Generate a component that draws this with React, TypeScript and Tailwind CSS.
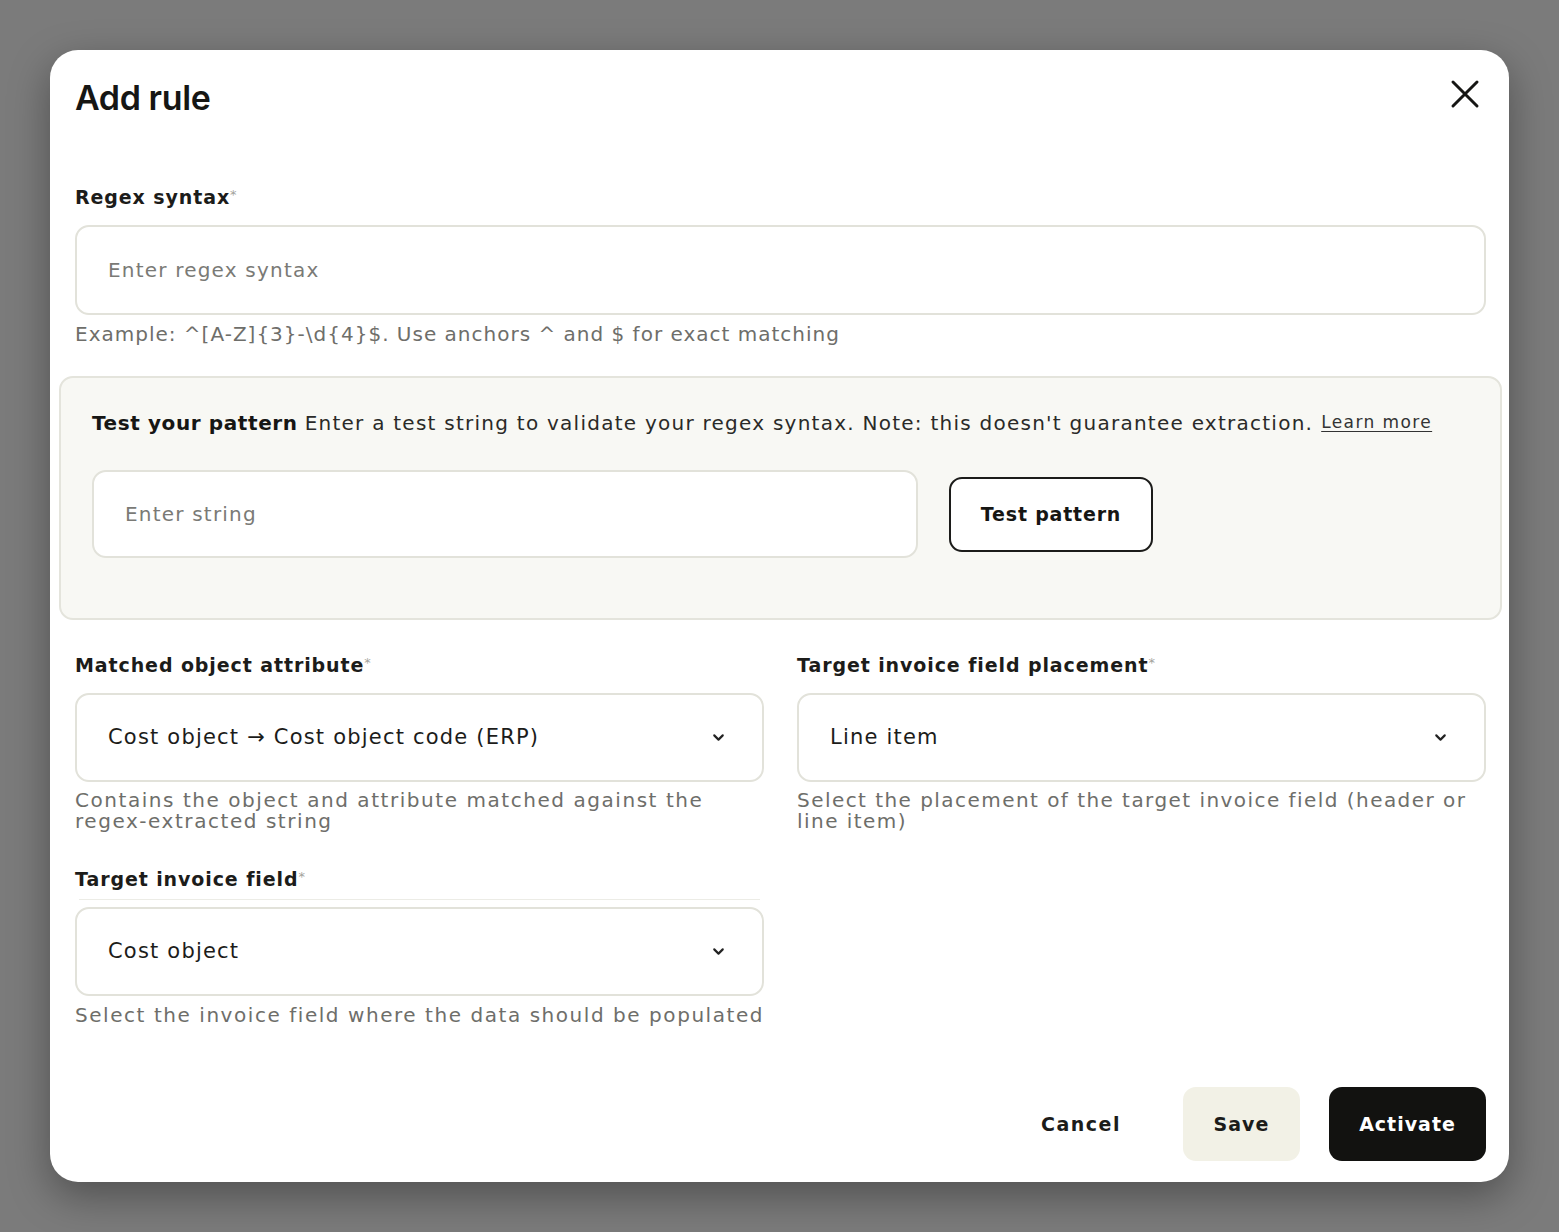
import React from 'react';
import { ChevronDown } from 'lucide-react';

const body = { fontFamily: '"DejaVu Sans", "Noto Sans", sans-serif' };
const heading = { fontFamily: 'Inter, "Noto Sans", sans-serif' };

const Label: React.FC<{ text: string }> = ({ text }) => (
  <div className="h-[28px] flex items-center text-[19px] font-semibold text-[#1c1c1a] tracking-[0.9px]">
    {text}
    <span className="text-[#a3a39c] text-[13px] self-start mt-[2px] font-normal tracking-normal">*</span>
  </div>
);

const Select: React.FC<{ value: string }> = ({ value }) => (
  <div className="h-[89px] rounded-[14px] border-2 border-[#e2e2da] bg-white flex items-center justify-between pl-[31px] pr-[35px]">
    <span className="text-[21px] text-[#1c1c1a] tracking-[1.2px]">{value}</span>
    <ChevronDown size={17} strokeWidth={3} className="text-[#222]" />
  </div>
);

const Helper: React.FC<{ children: React.ReactNode; className?: string }> = ({ children, className }) => (
  <p className={`text-[20px] text-[#6e6e6a] ${className ?? ''}`}>{children}</p>
);

export default function App() {
  return (
    <div style={body} className="min-h-screen bg-[#7b7b7b] p-[50px]">
      <div className="w-[1459px] h-[1132px] bg-white rounded-[28px] shadow-[0_14px_40px_rgba(0,0,0,0.35)] pl-[25px] pr-[23px] pt-[26px] flex flex-col">
        <div className="h-[42px] flex items-center justify-between">
          <h1 style={heading} className="text-[34px] font-semibold text-[#161614] tracking-[-0.4px]">Add rule</h1>
          <svg width="30" height="30" viewBox="0 0 30 30" className="mr-[6px] -mt-[6px]">
            <path d="M3 3 L27 27 M27 3 L3 27" stroke="#161614" strokeWidth="3" strokeLinecap="round" />
          </svg>
        </div>

        <div className="mt-[65px]">
          <Label text="Regex syntax" />
          <div className="mt-[14px] h-[90px] rounded-[14px] border-2 border-[#e2e2da] flex items-center pl-[31px]">
            <span className="text-[20px] text-[#7a7a76] tracking-[1.2px]">Enter regex syntax</span>
          </div>
          <Helper className="mt-[7px] leading-[24px] whitespace-nowrap tracking-[1px]">
            Example: ^[A-Z]{'{3}'}-\d{'{4}'}$. Use anchors ^ and $ for exact matching
          </Helper>
        </div>

        <div className="mt-[30px] -ml-[16px] -mr-[16px] h-[244px] rounded-[14px] border-2 border-[#e4e4dc] bg-[#f8f8f4] pl-[31px] pt-[31px]">
          <div className="h-[28px] flex items-center text-[20px] text-[#2a2a28] tracking-[1.25px] whitespace-nowrap">
            <span className="font-semibold text-[#161614] tracking-[0.6px]">Test your pattern</span>
            <span className="ml-[7px]">Enter a test string to validate your regex syntax. Note: this doesn't guarantee extraction.</span>
            <span className="ml-[8px] text-[17px] underline underline-offset-[3px] text-[#333] tracking-[1.4px]">Learn more</span>
          </div>
          <div className="mt-[33px] flex items-center gap-[31px]">
            <div className="w-[826px] h-[88px] rounded-[14px] border-2 border-[#e2e2da] bg-white flex items-center pl-[31px]">
              <span className="text-[20px] text-[#7a7a76] tracking-[1.2px]">Enter string</span>
            </div>
            <button className="w-[204px] h-[75px] rounded-[13px] border-2 border-[#1c1c1a] bg-white text-[19px] font-semibold text-[#161614] tracking-[0.8px]">
              Test pattern
            </button>
          </div>
        </div>

        <div className="mt-[31px] grid grid-cols-2 gap-x-[33px]">
          <div>
            <Label text="Matched object attribute" />
            <div className="mt-[14px]">
              <Select value="Cost object → Cost object code (ERP)" />
            </div>
            <Helper className="mt-[8px] leading-[21px] tracking-[1.55px]">
              Contains the object and attribute matched against the regex-extracted string
            </Helper>
          </div>
          <div>
            <Label text="Target invoice field placement" />
            <div className="mt-[14px]">
              <Select value="Line item" />
            </div>
            <Helper className="mt-[8px] leading-[21px] tracking-[1.45px]">
              Select the placement of the target invoice field (header or line item)
            </Helper>
          </div>
        </div>

        <div className="mt-[33px] w-[689px]">
          <Label text="Target invoice field" />
          <div className="mt-[6px] mx-[4px] border-t border-[#ececE6]" />
          <div className="mt-[7px]">
            <Select value="Cost object" />
          </div>
          <Helper className="mt-[7px] leading-[24px] whitespace-nowrap tracking-[1.55px]">
            Select the invoice field where the data should be populated
          </Helper>
        </div>

        <div className="mt-[60px] flex items-center justify-end">
          <button className="w-[130px] h-[74px] text-[19px] font-semibold text-[#1c1c1a] tracking-[1.5px]">Cancel</button>
          <button className="ml-[37px] h-[74px] w-[117px] rounded-[13px] bg-[#f2f1e6] text-[19px] font-semibold text-[#1c1c1a] tracking-[1px]">
            Save
          </button>
          <button className="ml-[29px] h-[74px] w-[157px] rounded-[13px] bg-[#121210] text-[19px] font-semibold text-white tracking-[1px]">
            Activate
          </button>
        </div>
      </div>
    </div>
  );
}
